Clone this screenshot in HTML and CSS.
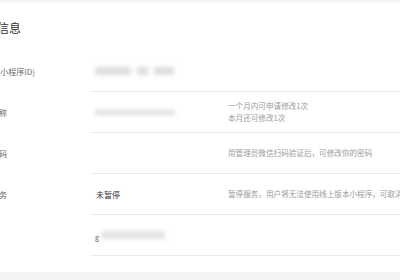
FILE: index.html
```html
<!DOCTYPE html>
<html lang="zh-CN">
<head>
<meta charset="utf-8">
<link rel="stylesheet" href="styles.css">
</head>
<body>
<div class="topband"></div>
<main class="card">
  <h2 class="title">基本信息</h2>
  <div class="row">
    <div class="label">AppID(小程序ID)</div>
    <div class="body">
      <div class="value"><span class="blur b1"></span><span class="blur b2"></span><span class="blur b3"></span></div>
      <div class="hint"></div>
    </div>
  </div>
  <div class="row">
    <div class="label">账号名称</div>
    <div class="body">
      <div class="value"><span class="blur thin b4"></span></div>
      <div class="hint">一个月内可申请修改1次<br>本月还可修改1次</div>
    </div>
  </div>
  <div class="row">
    <div class="label">登录密码</div>
    <div class="body">
      <div class="value"></div>
      <div class="hint">用管理员微信扫码验证后，可修改你的密码</div>
    </div>
  </div>
  <div class="row">
    <div class="label">暂停服务</div>
    <div class="body">
      <div class="value text">未暂停</div>
      <div class="hint nowrap">暂停服务，用户将无法使用线上版本小程序，可取消暂停</div>
    </div>
  </div>
  <div class="row">
    <div class="label">原始ID</div>
    <div class="body">
      <div class="value"><span class="mark">g</span><span class="blur b5"></span></div>
      <div class="hint"></div>
    </div>
  </div>
</main>
<div class="footer"></div>
</body>
</html>
```
FILE: styles.css
```css
html, body {
  margin: 0;
  padding: 0;
  background: #ffffff;
  font-family: "Noto Sans CJK SC", "Noto Sans", sans-serif;
  overflow: hidden;
}
.topband {
  height: 3px;
  background: linear-gradient(#f0f1f3, #f9f9fa);
}
.card {
  margin-left: -27px;
  padding-bottom: 16px;
}
.title {
  margin: 0;
  padding-top: 18px;
  height: 30px;
  font-size: 12px;
  line-height: 14px;
  font-weight: normal;
  color: #353535;
}
.row {
  display: grid;
  grid-template-columns: 117px 1fr;
  height: 41px;
}
.label {
  font-size: 8px;
  color: #666;
  display: flex;
  align-items: center;
  padding-left: 2px;
  white-space: nowrap;
}
.body {
  display: grid;
  grid-template-columns: 133px 1fr;
  border-bottom: 1px solid #ececec;
  padding-left: 5px;
}
.value {
  display: flex;
  align-items: center;
  gap: 6px;
  font-size: 8px;
  color: #353535;
}
.value.text {
  padding-left: 1px;
}
.hint {
  display: flex;
  align-items: center;
  font-size: 7.6px;
  line-height: 12px;
  color: #9a9a9a;
  white-space: nowrap;
}
.blur {
  display: inline-block;
  height: 8px;
  background: #dedede;
  filter: blur(2px);
}
.blur.thin { height: 5px; }
.b1 { width: 36px; }
.b2 { width: 11px; }
.b3 { width: 20px; }
.b4 { width: 80px; }
.b5 { width: 64px; height: 8px; margin-left: -4px; background: #e3e3e3; }
.mark {
  font-size: 7px;
  color: #666;
  margin-top: 4px;
}
.footer {
  height: 20px;
  background: #f3f4f6;
}
```
